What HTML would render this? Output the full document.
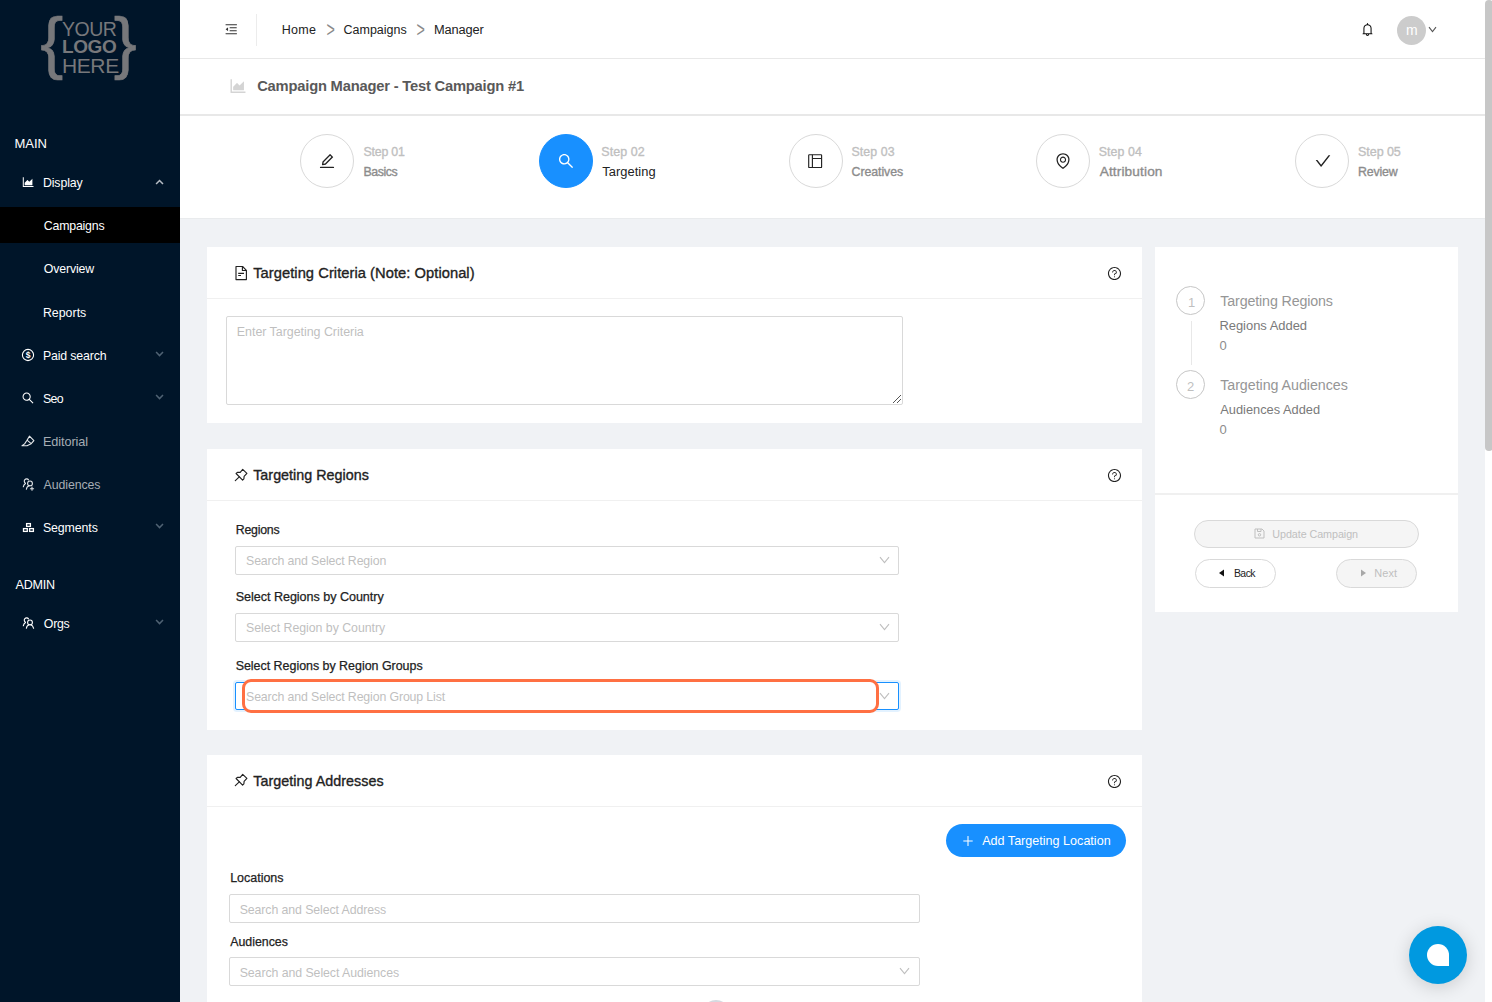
<!DOCTYPE html>
<html lang="en">
<head>
<meta charset="utf-8">
<title>Campaign Manager - Test Campaign #1</title>
<style>
*{box-sizing:border-box;margin:0;padding:0}
html,body{width:1492px;height:1002px;overflow:hidden;background:#f0f2f5;font-family:"Liberation Sans",sans-serif;color:#222;font-size:13px}
.abs{position:absolute}
#app{position:relative;width:1492px;height:1002px;overflow:hidden}
.tx{position:absolute;line-height:20px;white-space:nowrap}
.w{position:absolute;background:#fff}
.box{position:absolute;border:1px solid #d9d9d9;border-radius:2px;background:#fff}
.circ{position:absolute;border-radius:50%;border:1px solid #d9d9d9;background:#fff}
.pill{position:absolute;border:1px solid #d9d9d9;border-radius:16px}
.hl{position:absolute;height:1px;background:#f0f0f0}
</style>
</head>
<body>
<div id="app">

<!-- sidebar -->
<div class="abs" style="left:0;top:0;width:180px;height:1002px;background:#001529"></div>
<div class="abs" style="left:0;top:207px;width:180px;height:36px;background:#000"></div>

<!-- logo -->
<div class="abs" id="logo" style="left:0;top:0;width:180px;height:100px;color:#77787b">
  <span class="abs" id="lb1" style="left:40.3px;top:3px;font-size:69px;line-height:80px;-webkit-text-stroke:0.6px #77787b">{</span>
  <span class="abs" id="lb2" style="left:113.8px;top:3px;font-size:69px;line-height:80px;-webkit-text-stroke:0.6px #77787b">}</span>
  <span class="abs" id="lg1" style="left:62px;top:17px;font-size:19.5px;line-height:24px;letter-spacing:-0.5px">YOUR</span>
  <span class="abs" id="lg2" style="left:62px;top:35px;font-size:19px;line-height:24px;font-weight:bold;letter-spacing:-0.4px">LOGO</span>
  <span class="abs" id="lg3" style="left:62px;top:54px;font-size:21px;line-height:24px;letter-spacing:-0.4px">HERE</span>
</div>

<!-- sidebar icons -->
<svg class="abs" style="left:21.4px;top:175px" width="14.3" height="14.3" viewBox="0 0 1024 1024" fill="#fff"><path d="M888 792H200V168c0-4.400-3.600-8-8-8h-56c-4.400 0-8 3.600-8 8v688c0 4.400 3.600 8 8 8h752c4.400 0 8-3.600 8-8v-56c0-4.400-3.600-8-8-8zm-616-64h536c4.400 0 8-3.600 8-8V284c0-7.200-8.700-10.700-13.700-5.700L592 488.600l-125.400-124a8.030 8.030 0 0 0-11.300 0l-189 189.600a7.870 7.870 0 0 0-2.300 5.600V720c0 4.400 3.600 8 8 8z"/></svg>
<svg class="abs" style="left:150px;top:176px" width="20" height="12" viewBox="0 0 20 12"><path d="M6.1 8.1 L9.55 4.5 L13 8.1" fill="none" stroke="#b5bcc4" stroke-width="1.5"/></svg>
<svg class="abs" style="left:16px;top:342px" width="26" height="26" viewBox="0 0 26 26"><circle cx="12" cy="13" r="5.6" fill="none" stroke="#fff" stroke-width="1.1"/><text x="12" y="15.9" font-size="8.5" font-weight="bold" fill="#fff" text-anchor="middle" font-family="Liberation Sans, sans-serif">$</text></svg>
<svg class="abs" style="left:150px;top:348px" width="20" height="12" viewBox="0 0 20 12"><path d="M6.1 4 L9.55 7.6 L13 4" fill="none" stroke="#4f6273" stroke-width="1.5"/></svg>
<svg class="abs" style="left:21px;top:391px" width="14" height="14" viewBox="0 0 1024 1024" fill="#fff"><path d="M909.600 854.500L649.900 594.800C690.200 542.700 712 479 712 412c0-80.200-31.300-155.400-87.900-212.100-56.600-56.700-132-87.900-212.100-87.900s-155.500 31.300-212.100 87.900C143.200 256.500 112 331.800 112 412c0 80.100 31.300 155.500 87.900 212.100C256.500 680.800 331.800 712 412 712c67 0 130.600-21.800 182.700-62l259.700 259.600a8.200 8.200 0 0 0 11.600 0l43.600-43.500a8.200 8.200 0 0 0 0-11.600zM570.400 570.400C528 612.700 471.800 636 412 636s-116-23.300-158.400-65.600C211.300 528 188 471.800 188 412s23.300-116.100 65.600-158.400C296 211.300 352.200 188 412 188s116.100 23.200 158.400 65.600S636 352.200 636 412s-23.300 116.100-65.600 158.400z"/></svg>
<svg class="abs" style="left:150px;top:391px" width="20" height="12" viewBox="0 0 20 12"><path d="M6.1 4 L9.55 7.6 L13 4" fill="none" stroke="#4f6273" stroke-width="1.5"/></svg>
<svg class="abs" style="left:16px;top:428px" width="26" height="26" viewBox="0 0 26 26" fill="none" stroke="#e4e7ea" stroke-width="1.1" stroke-linejoin="round"><path d="M13.5 8.1 L17.9 12.7 L15.2 15.7 L11 17.8 L6 17.8 L8.6 15.9 L11 12.2 Z"/><path d="M11 12.2 L15.2 15.7"/></svg>
<svg class="abs" style="left:16px;top:471px" width="26" height="26" viewBox="0 0 26 26" fill="none" stroke="#e4e7ea" stroke-width="1.1" stroke-linecap="round"><circle cx="14" cy="12.4" r="2.4"/><path d="M10.4 18.3 C10.6 16.2 11.8 15 13.4 14.8"/><path d="M12.5 8.9 A2.3 2.3 0 1 0 9.5 12.2"/><path d="M7.3 15.8 C7.6 14.2 8.4 13.2 9.5 12.5"/><path d="M14.4 17.7 H17.6 M16 16.1 V19.3"/></svg>
<svg class="abs" style="left:16px;top:514px" width="26" height="26" viewBox="0 0 26 26" fill="none" stroke="#fff" stroke-width="1.3"><rect x="10.6" y="9.6" width="3.8" height="2.8"/><rect x="7.5" y="14.6" width="3.8" height="2.8"/><rect x="13.6" y="14.6" width="3.8" height="2.8"/></svg>
<svg class="abs" style="left:150px;top:519.5px" width="20" height="12" viewBox="0 0 20 12"><path d="M6.1 4 L9.55 7.6 L13 4" fill="none" stroke="#4f6273" stroke-width="1.5"/></svg>
<svg class="abs" style="left:16px;top:610px" width="26" height="26" viewBox="0 0 26 26" fill="none" stroke="#fff" stroke-width="1.1" stroke-linecap="round"><circle cx="14" cy="12.4" r="2.4"/><path d="M10.4 18.3 C10.6 16.2 11.8 15 13.4 14.8"/><path d="M14.6 14.8 C16 15.2 17.2 16.6 17.6 18.3"/><path d="M12.5 8.9 A2.3 2.3 0 1 0 9.5 12.2"/><path d="M7.3 15.8 C7.6 14.2 8.4 13.2 9.5 12.5"/></svg>
<svg class="abs" style="left:150px;top:615.7px" width="20" height="12" viewBox="0 0 20 12"><path d="M6.1 4 L9.55 7.6 L13 4" fill="none" stroke="#4f6273" stroke-width="1.5"/></svg>

<!-- header -->
<div class="w" style="left:180px;top:0;width:1305px;height:58px"></div>
<div class="abs" style="left:180px;top:58px;width:1305px;height:1px;background:#e8e8e8"></div>
<div class="w" style="left:180px;top:59px;width:1305px;height:55px"></div>
<div class="abs" style="left:180px;top:114px;width:1305px;height:2px;background:#e8e8e8"></div>
<div class="w" style="left:180px;top:116px;width:1305px;height:102px"></div>
<div class="abs" style="left:180px;top:218px;width:1305px;height:1px;background:#e9ebed"></div>
<svg class="abs" style="left:224px;top:21.5px" width="14.5" height="14.5" viewBox="0 0 1024 1024" fill="#333"><path d="M408 442h480c4.400 0 8-3.600 8-8v-56c0-4.400-3.600-8-8-8H408c-4.400 0-8 3.600-8 8v56c0 4.400 3.600 8 8 8zm-8 204c0 4.400 3.600 8 8 8h480c4.400 0 8-3.600 8-8v-56c0-4.400-3.600-8-8-8H408c-4.400 0-8 3.600-8 8v56zm504-486H120c-4.400 0-8 3.600-8 8v56c0 4.400 3.600 8 8 8h784c4.400 0 8-3.600 8-8v-56c0-4.400-3.600-8-8-8zm0 632H120c-4.400 0-8 3.600-8 8v56c0 4.400 3.600 8 8 8h784c4.400 0 8-3.600 8-8v-56c0-4.400-3.600-8-8-8zM115.400 518.900L271.700 642c5.800 4.600 14.400.5 14.400-6.900V388.900c0-7.400-8.500-11.500-14.400-6.900L115.400 505.100a8.740 8.740 0 0 0 0 13.800z"/></svg>
<div class="abs" style="left:256px;top:14px;width:1px;height:32px;background:#ececec"></div>
<svg class="abs" style="left:1359.5px;top:22px" width="15" height="15" viewBox="0 0 1024 1024" fill="#111"><path d="M816 768h-24V428c0-141.100-104.300-257.700-240-277.100V112c0-22.100-17.900-40-40-40s-40 17.900-40 40v38.900c-135.700 19.400-240 136-240 277.100v340h-24c-17.700 0-32 14.300-32 32v32c0 4.400 3.600 8 8 8h216c0 61.800 50.200 112 112 112s112-50.200 112-112h216c4.400 0 8-3.600 8-8v-32c0-17.700-14.300-32-32-32zM512 888c-26.500 0-48-21.500-48-48h96c0 26.500-21.500 48-48 48zM304 768V428c0-55.600 21.600-107.800 60.900-147.100S456.400 220 512 220c55.600 0 107.800 21.600 147.100 60.900S720 372.400 720 428v340H304z"/></svg>
<div class="abs" style="left:1397px;top:16px;width:29px;height:29px;border-radius:50%;background:#ccc"></div>
<svg class="abs" style="left:1427.8px;top:25.6px" width="9" height="7" viewBox="0 0 9 7"><path d="M1 1.2 L4.5 5.6 L8 1.2" fill="none" stroke="#555" stroke-width="1.1"/></svg>
<svg class="abs" style="left:227.5px;top:76px" width="20" height="20" viewBox="0 0 1024 1024" fill="#d4d4d4"><path d="M888 792H200V168c0-4.400-3.600-8-8-8h-56c-4.400 0-8 3.600-8 8v688c0 4.400 3.600 8 8 8h752c4.400 0 8-3.600 8-8v-56c0-4.400-3.600-8-8-8zm-616-64h536c4.400 0 8-3.600 8-8V284c0-7.200-8.700-10.700-13.700-5.700L592 488.600l-125.400-124a8.030 8.030 0 0 0-11.300 0l-189 189.600a7.870 7.870 0 0 0-2.300 5.600V720c0 4.400 3.600 8 8 8z"/></svg>

<!-- steps -->
<div class="circ" style="left:300px;top:134px;width:54px;height:54px"></div>
<svg class="abs" style="left:318px;top:152px" width="18" height="18" viewBox="0 0 1024 1024" fill="#222"><path d="M257.700 752c2 0 4-.2 6-.5L431.900 722c2-.4 3.900-1.300 5.300-2.800l423.900-423.900a9.960 9.960 0 0 0 0-14.100L694.900 114.900c-1.900-1.900-4.400-2.900-7.100-2.900s-5.200 1-7.100 2.900L256.800 538.800c-1.500 1.500-2.400 3.300-2.800 5.300l-29.500 168.200a33.500 33.500 0 0 0 9.400 29.800c6.600 6.400 14.900 9.900 23.800 9.900zm67.400-174.400L687.800 215l73.300 73.300-362.700 362.600-88.900 15.700 15.600-89zM880 836H144c-17.700 0-32 14.300-32 32v36c0 4.400 3.600 8 8 8h784c4.400 0 8-3.600 8-8v-36c0-17.700-14.300-32-32-32z"/></svg>
<div class="circ" style="left:539px;top:134px;width:54px;height:54px;background:#1890ff;border-color:#1890ff"></div>
<svg class="abs" style="left:556.8px;top:152px" width="18" height="18" viewBox="0 0 1024 1024" fill="#fff"><path d="M909.600 854.500L649.900 594.800C690.200 542.700 712 479 712 412c0-80.200-31.300-155.400-87.900-212.100-56.600-56.700-132-87.900-212.100-87.900s-155.500 31.300-212.100 87.900C143.200 256.500 112 331.800 112 412c0 80.100 31.300 155.500 87.900 212.100C256.500 680.800 331.800 712 412 712c67 0 130.600-21.800 182.700-62l259.700 259.600a8.200 8.200 0 0 0 11.600 0l43.600-43.500a8.200 8.200 0 0 0 0-11.600zM570.400 570.400C528 612.700 471.800 636 412 636s-116-23.300-158.400-65.600C211.300 528 188 471.800 188 412s23.300-116.100 65.600-158.400C296 211.300 352.200 188 412 188s116.100 23.200 158.400 65.600S636 352.200 636 412s-23.300 116.100-65.600 158.400z"/></svg>
<div class="circ" style="left:789px;top:134px;width:54px;height:54px"></div>
<svg class="abs" style="left:802px;top:148px" width="26" height="26" viewBox="0 0 26 26" fill="none" stroke="#222" stroke-width="1.15" stroke-linejoin="round"><rect x="6.7" y="6.7" width="12.9" height="12.8" rx="0.6"/><path d="M10.4 6.7 V19.5 M10.4 10.5 H19.6"/></svg>
<div class="circ" style="left:1036px;top:134px;width:54px;height:54px"></div>
<svg class="abs" style="left:1054.2px;top:151.8px" width="18" height="18" viewBox="0 0 1024 1024" fill="#222"><path d="M854.600 289.100a362.490 362.490 0 0 0-79.900-115.700 370.830 370.830 0 0 0-118.200-77.800C610.700 76.600 562.100 67 512 67c-50.100 0-98.700 9.600-144.500 28.500-44.300 18.300-84 44.500-118.200 77.800A363.600 363.600 0 0 0 169.400 289c-19.500 45-29.400 92.800-29.400 142 0 70.600 16.900 140.900 50.100 208.700 26.700 54.500 64 107.600 111 158.100 80.300 86.200 164.500 138.900 188.400 153a43.900 43.900 0 0 0 22.400 6.100c7.800 0 15.500-2 22.400-6.100 23.900-14.100 108.100-66.800 188.400-153 47-50.400 84.300-103.600 111-158.100C867.100 572 884 501.800 884 431.100c0-49.200-9.900-97-29.400-142zM512 880.200c-65.900-41.900-300-207.800-300-449.100 0-77.900 31.100-151.100 87.600-206.300C356.300 169.500 431.700 139 512 139s155.700 30.500 212.400 85.900C780.900 280 812 353.200 812 431.100c0 241.300-234.100 407.200-300 449.100zm0-617.200c-97.200 0-176 78.800-176 176s78.800 176 176 176 176-78.800 176-176-78.800-176-176-176zm79.200 255.200A111.600 111.600 0 0 1 512 551c-29.900 0-58-11.700-79.200-32.800A111.600 111.600 0 0 1 400 439c0-29.900 11.700-58 32.800-79.200C454 338.600 482.100 327 512 327c29.900 0 58 11.600 79.200 32.800C612.400 381 624 409.100 624 439c0 29.900-11.600 58-32.800 79.200z"/></svg>
<div class="circ" style="left:1295px;top:134px;width:54px;height:54px"></div>
<svg class="abs" style="left:1313.5px;top:151.8px" width="18" height="18" viewBox="0 0 1024 1024" fill="#222"><path d="M912 190h-69.900c-9.800 0-19.100 4.500-25.100 12.200L404.700 724.500 207 474a32 32 0 0 0-25.100-12.200H112c-6.700 0-10.400 7.700-6.300 12.900l273.900 347c12.800 16.200 37.400 16.200 50.300 0l488.400-618.900c4.100-5.100.4-12.800-6.300-12.800z"/></svg>

<!-- card 1 -->
<div class="w" style="left:207px;top:247px;width:935px;height:176px"></div>
<div class="hl" style="left:207px;top:298px;width:935px"></div>
<svg class="abs" style="left:230px;top:260px" width="26" height="26" viewBox="0 0 26 26" fill="none" stroke="#222" stroke-width="1.15" stroke-linejoin="round"><path d="M6 6.5 H12.6 L16.4 10.3 V19.6 H6 Z"/><path d="M12.4 6.7 V10.5 H16.2"/><path d="M8.2 13.4 H14 M8.2 15.5 H11"/></svg>
<svg class="abs" style="left:1106.5px;top:266px" width="15" height="15" viewBox="0 0 1024 1024" fill="#222"><path d="M512 64C264.600 64 64 264.600 64 512s200.600 448 448 448 448-200.600 448-448S759.400 64 512 64zm0 820c-205.400 0-372-166.600-372-372s166.600-372 372-372 372 166.600 372 372-166.600 372-372 372z"/><path d="M623.600 316.700C593.600 290.400 554 276 512 276s-81.600 14.500-111.600 40.700C369.200 344 352 380.700 352 420v7.600c0 4.400 3.600 8 8 8h48c4.400 0 8-3.600 8-8V420c0-44.100 43.100-80 96-80s96 35.900 96 80c0 31.100-22 59.600-56.100 72.700-21.200 8.100-39.200 22.300-52.100 40.900-13.100 19-19.900 41.800-19.900 64.900V620c0 4.400 3.600 8 8 8h48c4.400 0 8-3.600 8-8v-22.700a48.300 48.300 0 0 1 30.900-44.800c59-22.700 97.100-74.700 97.100-132.500.1-39.300-17.100-76-48.300-103.300zM472 732a40 40 0 1 0 80 0 40 40 0 1 0-80 0z"/></svg>
<div class="box" style="left:226px;top:316px;width:677px;height:89px"></div>
<svg class="abs" style="left:892px;top:394px" width="10" height="10" viewBox="0 0 10 10" stroke="#555" stroke-width="1"><path d="M9 1 L1 9 M9 5 L5 9"/></svg>

<!-- card 2 -->
<div class="w" style="left:207px;top:449px;width:935px;height:281px"></div>
<div class="hl" style="left:207px;top:500px;width:935px"></div>
<svg class="abs" style="left:230px;top:462px" width="26" height="26" viewBox="0 0 26 26" fill="none" stroke="#222" stroke-width="1.15" stroke-linejoin="round" stroke-linecap="round"><path d="M12.7 7.4 L16.9 11.4 L14.1 14.4 L13.9 16.8 L12.6 18.1 L6.1 11.5 L7.4 10.3 L10.2 10.3 Z"/><path d="M9.3 14.8 L5.3 18.6"/></svg>
<svg class="abs" style="left:1106.5px;top:468px" width="15" height="15" viewBox="0 0 1024 1024" fill="#222"><path d="M512 64C264.600 64 64 264.600 64 512s200.600 448 448 448 448-200.600 448-448S759.400 64 512 64zm0 820c-205.400 0-372-166.600-372-372s166.600-372 372-372 372 166.600 372 372-166.600 372-372 372z"/><path d="M623.600 316.700C593.600 290.400 554 276 512 276s-81.600 14.500-111.600 40.700C369.200 344 352 380.700 352 420v7.600c0 4.400 3.600 8 8 8h48c4.400 0 8-3.600 8-8V420c0-44.100 43.100-80 96-80s96 35.900 96 80c0 31.100-22 59.600-56.100 72.700-21.200 8.100-39.200 22.300-52.100 40.900-13.100 19-19.900 41.800-19.900 64.900V620c0 4.400 3.600 8 8 8h48c4.400 0 8-3.600 8-8v-22.700a48.300 48.300 0 0 1 30.900-44.800c59-22.700 97.100-74.700 97.100-132.500.1-39.300-17.100-76-48.300-103.300zM472 732a40 40 0 1 0 80 0 40 40 0 1 0-80 0z"/></svg>
<div class="box" style="left:235px;top:546px;width:664px;height:29px"></div>
<svg class="abs" style="left:879px;top:556px" width="11" height="8" viewBox="0 0 11 8"><path d="M1 1.2 L5.5 6.6 L10 1.2" fill="none" stroke="#bfbfbf" stroke-width="1.1"/></svg>
<div class="box" style="left:235px;top:613px;width:664px;height:29px"></div>
<svg class="abs" style="left:879px;top:623px" width="11" height="8" viewBox="0 0 11 8"><path d="M1 1.2 L5.5 6.6 L10 1.2" fill="none" stroke="#bfbfbf" stroke-width="1.1"/></svg>
<div class="box" style="left:235px;top:682px;width:664px;height:28px;border-color:#1890ff;box-shadow:0 0 0 2px rgba(24,144,255,.12)"></div>
<svg class="abs" style="left:879px;top:691.5px" width="11" height="8" viewBox="0 0 11 8"><path d="M1 1.2 L5.5 6.6 L10 1.2" fill="none" stroke="#bfbfbf" stroke-width="1.1"/></svg>
<div class="abs" style="left:242px;top:679px;width:637px;height:34px;border:3.5px solid #ff7043;border-radius:9px;background:#fff"></div>

<!-- card 3 -->
<div class="w" style="left:207px;top:755px;width:935px;height:260px"></div>
<div class="hl" style="left:207px;top:806px;width:935px"></div>
<svg class="abs" style="left:230px;top:766.6px" width="26" height="26" viewBox="0 0 26 26" fill="none" stroke="#222" stroke-width="1.15" stroke-linejoin="round" stroke-linecap="round"><path d="M12.7 7.4 L16.9 11.4 L14.1 14.4 L13.9 16.8 L12.6 18.1 L6.1 11.5 L7.4 10.3 L10.2 10.3 Z"/><path d="M9.3 14.8 L5.3 18.6"/></svg>
<svg class="abs" style="left:1106.5px;top:773.5px" width="15" height="15" viewBox="0 0 1024 1024" fill="#222"><path d="M512 64C264.600 64 64 264.600 64 512s200.600 448 448 448 448-200.600 448-448S759.400 64 512 64zm0 820c-205.400 0-372-166.600-372-372s166.600-372 372-372 372 166.600 372 372-166.600 372-372 372z"/><path d="M623.600 316.700C593.600 290.400 554 276 512 276s-81.600 14.500-111.600 40.700C369.200 344 352 380.700 352 420v7.600c0 4.400 3.600 8 8 8h48c4.400 0 8-3.600 8-8V420c0-44.100 43.100-80 96-80s96 35.900 96 80c0 31.100-22 59.600-56.100 72.700-21.200 8.100-39.200 22.300-52.100 40.900-13.100 19-19.900 41.800-19.900 64.900V620c0 4.400 3.600 8 8 8h48c4.400 0 8-3.600 8-8v-22.700a48.300 48.300 0 0 1 30.900-44.800c59-22.700 97.100-74.700 97.100-132.500.1-39.300-17.100-76-48.300-103.300zM472 732a40 40 0 1 0 80 0 40 40 0 1 0-80 0z"/></svg>
<div class="abs" style="left:946px;top:824px;width:180px;height:33px;border-radius:17px;background:#1890ff"></div>
<svg class="abs" style="left:961px;top:833.5px" width="14" height="14" viewBox="0 0 1024 1024" fill="#fff"><path d="M482 152h60q8 0 8 8v704q0 8-8 8h-60q-8 0-8-8V160q0-8 8-8z M176 474h672q8 0 8 8v60q0 8-8 8H176q-8 0-8-8v-60q0-8 8-8z"/></svg>
<div class="box" style="left:229px;top:894px;width:691px;height:29px"></div>
<div class="box" style="left:229px;top:957px;width:691px;height:29px"></div>
<svg class="abs" style="left:899px;top:967px" width="11" height="8" viewBox="0 0 11 8"><path d="M1 1.2 L5.5 6.6 L10 1.2" fill="none" stroke="#bfbfbf" stroke-width="1.1"/></svg>
<div class="abs" style="left:702px;top:999.5px;width:28px;height:28px;border-radius:50%;background:#d5d9e0"></div>

<!-- right panel -->
<div class="w" style="left:1155px;top:247px;width:303px;height:365px"></div>
<div class="abs" style="left:1155px;top:493px;width:303px;height:2px;background:#f0f0f0"></div>
<div class="circ" style="left:1176px;top:286px;width:29px;height:29px;border-color:#c6c6c6"></div>
<div class="abs" style="left:1191px;top:321px;width:1px;height:44px;background:#e8e8e8"></div>
<div class="circ" style="left:1176px;top:370px;width:29px;height:29px;border-color:#c6c6c6"></div>
<div class="pill" style="left:1194px;top:520px;width:225px;height:28px;background:#f5f5f5"></div>
<svg class="abs" style="left:1254px;top:528px" width="11" height="11" viewBox="0 0 11 11" fill="none" stroke="#bfbfbf" stroke-width="1"><path d="M1 1 H8 L10 3 V10 H1 Z"/><path d="M3.5 1 V3.5 H7 V1"/><circle cx="5.5" cy="6.8" r="1.2"/></svg>
<div class="pill" style="left:1195px;top:559px;width:81px;height:29px;background:#fff"></div>
<svg class="abs" style="left:1218px;top:569px" width="7" height="8" viewBox="0 0 7 8"><path d="M6 0.6 V7.4 L1 4 Z" fill="#111"/></svg>
<div class="pill" style="left:1336px;top:559px;width:81px;height:29px;background:#f5f5f5"></div>
<svg class="abs" style="left:1360px;top:569px" width="7" height="8" viewBox="0 0 7 8"><path d="M1 0.6 V7.4 L6 4 Z" fill="#a8a8a8"/></svg>

<!-- texts -->
<span class="tx" id="s_main" style="left:14.54px;top:134.48px;font-size:13.04px;color:#fff;letter-spacing:-0.090px;">MAIN</span>
<span class="tx" id="s_display" style="left:42.88px;top:172.72px;font-size:12.35px;color:#fff;letter-spacing:-0.105px;">Display</span>
<span class="tx" id="s_camp" style="left:43.78px;top:215.72px;font-size:12.35px;color:#fff;letter-spacing:-0.202px;">Campaigns</span>
<span class="tx" id="s_over" style="left:43.78px;top:258.72px;font-size:12.35px;color:#fff;letter-spacing:-0.154px;">Overview</span>
<span class="tx" id="s_rep" style="left:42.88px;top:302.72px;font-size:12.35px;color:#fff;letter-spacing:0.030px;">Reports</span>
<span class="tx" id="s_paid" style="left:42.88px;top:345.72px;font-size:12.35px;color:#fff;letter-spacing:-0.153px;">Paid search</span>
<span class="tx" id="s_seo" style="left:42.88px;top:388.72px;font-size:12.35px;color:#fff;letter-spacing:-0.630px;">Seo</span>
<span class="tx" id="s_edit" style="left:42.88px;top:431.60px;font-size:12.69px;color:#a6adb4;letter-spacing:-0.079px;">Editorial</span>
<span class="tx" id="s_aud" style="left:43.62px;top:474.72px;font-size:12.35px;color:#a6adb4;letter-spacing:-0.090px;">Audiences</span>
<span class="tx" id="s_seg" style="left:42.88px;top:517.72px;font-size:12.35px;color:#fff;letter-spacing:-0.090px;">Segments</span>
<span class="tx" id="s_admin" style="left:15.44px;top:574.64px;font-size:12.57px;color:#fff;letter-spacing:-0.180px;">ADMIN</span>
<span class="tx" id="s_orgs" style="left:43.78px;top:613.72px;font-size:12.35px;color:#fff;letter-spacing:-0.240px;">Orgs</span>
<span class="tx" id="h_home" style="left:281.80px;top:19.86px;font-size:12.52px;color:#222;letter-spacing:0.270px;">Home</span>
<span class="tx" id="h_gt1" style="left:327.20px;top:19.70px;font-size:13px;color:#8a8a8a;transform:scale(1.1,1.65);">&gt;</span>
<span class="tx" id="h_camp" style="left:343.54px;top:19.88px;font-size:12.47px;color:#222;letter-spacing:0.011px;">Campaigns</span>
<span class="tx" id="h_gt2" style="left:417.20px;top:19.70px;font-size:13px;color:#8a8a8a;transform:scale(1.1,1.65);">&gt;</span>
<span class="tx" id="h_mgr" style="left:434.04px;top:19.76px;font-size:12.82px;color:#222;letter-spacing:-0.135px;">Manager</span>
<span class="tx" id="h_m" style="left:1406.04px;top:20.15px;font-size:14px;color:#fff;">m</span>
<span class="tx" id="ttl" style="left:257.20px;top:76.10px;font-size:14.72px;color:#595959;font-weight:bold;letter-spacing:-0.201px;">Campaign Manager - Test Campaign #1</span>
<span class="tx" id="st0a" style="left:363.54px;top:141.72px;font-size:12.35px;color:#bfbfbf;-webkit-text-stroke:0.35px #bfbfbf;letter-spacing:-0.210px;">Step 01</span>
<span class="tx" id="st0b" style="left:363.54px;top:161.72px;font-size:12.35px;color:#8c8c8c;-webkit-text-stroke:0.35px #8c8c8c;letter-spacing:-0.432px;">Basics</span>
<span class="tx" id="st1a" style="left:601.30px;top:141.68px;font-size:12.47px;color:#bfbfbf;-webkit-text-stroke:0.35px #bfbfbf;letter-spacing:0.060px;">Step 02</span>
<span class="tx" id="st1b" style="left:602.20px;top:161.54px;font-size:12.88px;color:#222;letter-spacing:0.056px;">Targeting</span>
<span class="tx" id="st2a" style="left:851.54px;top:141.72px;font-size:12.35px;color:#bfbfbf;-webkit-text-stroke:0.35px #bfbfbf;letter-spacing:0.075px;">Step 03</span>
<span class="tx" id="st2b" style="left:851.54px;top:161.72px;font-size:12.35px;color:#8c8c8c;-webkit-text-stroke:0.35px #8c8c8c;letter-spacing:-0.056px;">Creatives</span>
<span class="tx" id="st3a" style="left:1098.80px;top:141.72px;font-size:12.35px;color:#bfbfbf;-webkit-text-stroke:0.35px #bfbfbf;letter-spacing:0.075px;">Step 04</span>
<span class="tx" id="st3b" style="left:1099.70px;top:162.27px;font-size:13.65px;color:#8c8c8c;-webkit-text-stroke:0.35px #8c8c8c;letter-spacing:0.135px;">Attribution</span>
<span class="tx" id="st4a" style="left:1358.04px;top:141.65px;font-size:12.56px;color:#bfbfbf;-webkit-text-stroke:0.35px #bfbfbf;letter-spacing:-0.075px;">Step 05</span>
<span class="tx" id="st4b" style="left:1358.04px;top:161.72px;font-size:12.35px;color:#8c8c8c;-webkit-text-stroke:0.35px #8c8c8c;letter-spacing:-0.162px;">Review</span>
<span class="tx" id="c1t" style="left:253.20px;top:263.11px;font-size:14.7px;color:#222;-webkit-text-stroke:0.35px #222;letter-spacing:0.053px;">Targeting Criteria (Note: Optional)</span>
<span class="tx" id="c1p" style="left:236.80px;top:321.88px;font-size:12.48px;color:#bfbfbf;letter-spacing:-0.043px;">Enter Targeting Criteria</span>
<span class="tx" id="c2t" style="left:253.20px;top:465.04px;font-size:14.31px;color:#222;-webkit-text-stroke:0.35px #222;letter-spacing:0.028px;">Targeting Regions</span>
<span class="tx" id="c2l1" style="left:235.70px;top:520.42px;font-size:12.35px;color:#222;-webkit-text-stroke:0.25px #222;letter-spacing:-0.225px;">Regions</span>
<span class="tx" id="c2p1" style="left:246.04px;top:550.72px;font-size:12.35px;color:#bfbfbf;letter-spacing:-0.137px;">Search and Select Region</span>
<span class="tx" id="c2l2" style="left:235.70px;top:586.84px;font-size:12.58px;color:#222;-webkit-text-stroke:0.25px #222;letter-spacing:-0.037px;">Select Regions by Country</span>
<span class="tx" id="c2p2" style="left:246.04px;top:618.22px;font-size:12.35px;color:#bfbfbf;letter-spacing:-0.035px;">Select Region by Country</span>
<span class="tx" id="c2l3" style="left:235.70px;top:655.69px;font-size:12.44px;color:#222;-webkit-text-stroke:0.25px #222;letter-spacing:-0.015px;">Select Regions by Region Groups</span>
<span class="tx" id="c2p3" style="left:246.04px;top:687.42px;font-size:12.35px;color:#bfbfbf;letter-spacing:-0.137px;">Search and Select Region Group List</span>
<span class="tx" id="c3t" style="left:253.20px;top:771.25px;font-size:14.3px;color:#222;-webkit-text-stroke:0.35px #222;letter-spacing:0.045px;">Targeting Addresses</span>
<span class="tx" id="c3b" style="left:982.20px;top:831.04px;font-size:12.57px;color:#fff;letter-spacing:0.009px;">Add Targeting Location</span>
<span class="tx" id="c3l1" style="left:230.20px;top:868.18px;font-size:12.47px;color:#222;-webkit-text-stroke:0.25px #222;letter-spacing:-0.011px;">Locations</span>
<span class="tx" id="c3p1" style="left:239.64px;top:899.92px;font-size:12.35px;color:#bfbfbf;letter-spacing:-0.094px;">Search and Select Address</span>
<span class="tx" id="c3l2" style="left:230.20px;top:932.22px;font-size:12.36px;color:#222;-webkit-text-stroke:0.25px #222;">Audiences</span>
<span class="tx" id="c3p2" style="left:239.64px;top:962.72px;font-size:12.35px;color:#bfbfbf;letter-spacing:-0.069px;">Search and Select Audiences</span>
<span class="tx" id="r_1" style="left:1187.96px;top:292.50px;font-size:13px;color:#bfbfbf;">1</span>
<span class="tx" id="r_t1" style="left:1220.28px;top:290.56px;font-size:14.25px;color:#969696;letter-spacing:-0.135px;">Targeting Regions</span>
<span class="tx" id="r_s1" style="left:1219.38px;top:315.51px;font-size:12.96px;color:#7a7a7a;letter-spacing:-0.015px;">Regions Added</span>
<span class="tx" id="r_01" style="left:1219.38px;top:335.50px;font-size:13px;color:#8c8c8c;">0</span>
<span class="tx" id="r_2" style="left:1186.96px;top:376.50px;font-size:13px;color:#bfbfbf;">2</span>
<span class="tx" id="r_t2" style="left:1220.20px;top:374.56px;font-size:14.25px;color:#969696;letter-spacing:-0.040px;">Targeting Audiences</span>
<span class="tx" id="r_s2" style="left:1220.20px;top:399.56px;font-size:12.82px;color:#7a7a7a;letter-spacing:0.013px;">Audiences Added</span>
<span class="tx" id="r_02" style="left:1219.38px;top:419.50px;font-size:13px;color:#8c8c8c;">0</span>
<span class="tx" id="r_upd" style="left:1272.30px;top:524.28px;font-size:10.75px;color:#bfbfbf;letter-spacing:-0.064px;">Update Campaign</span>
<span class="tx" id="r_back" style="left:1233.96px;top:564.38px;font-size:10.45px;color:#222;letter-spacing:-0.540px;">Back</span>
<span class="tx" id="r_next" style="left:1374.30px;top:563.21px;font-size:10.95px;color:#bfbfbf;letter-spacing:0.090px;">Next</span>

<!-- scrollbar -->
<div class="abs" style="left:1485px;top:0;width:7px;height:1002px;background:#fff"></div>
<div class="abs" style="left:1485px;top:0;width:8px;height:451px;background:#c7c7c7;border-radius:4px"></div>

<!-- chat -->
<div class="abs" style="left:1409px;top:926px;width:58px;height:58px;border-radius:50%;background:#0099e0;box-shadow:0 3px 18px rgba(0,0,0,.16)"></div>
<svg class="abs" style="left:1409px;top:926px" width="58" height="58" viewBox="0 0 58 58"><path d="M29 18 A11 11 0 0 1 40 29 V40 H29 A11 11 0 0 1 29 18 Z" fill="#fff"/></svg>

</div>
</body>
</html>
